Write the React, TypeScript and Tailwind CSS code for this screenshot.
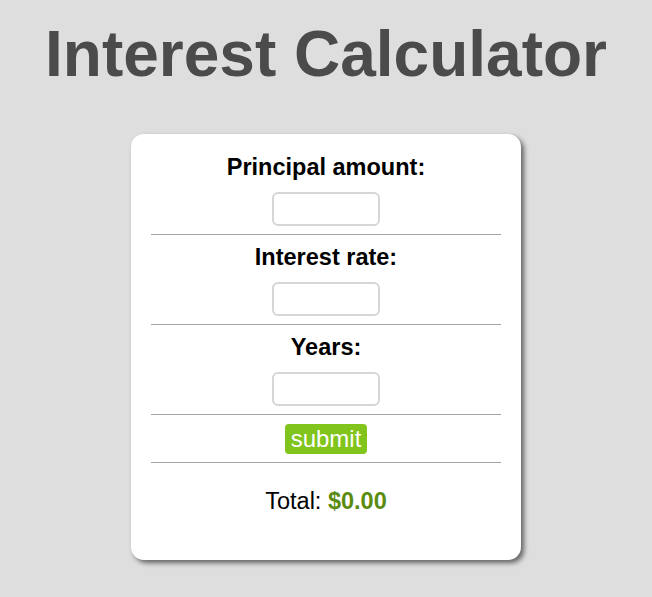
import React from "react";

function Field({ label }: { label: string }) {
  return (
    <>
      <div className="text-[23.5px] leading-[26px] font-bold text-black">{label}</div>
      <input
        type="text"
        className="mt-[12px] w-[108px] h-[34px] border-2 border-[#d6d6d6] rounded-[6px] bg-white outline-none"
      />
      <div className="mt-[8px] mb-[9px] w-full h-px bg-[#a3a3a3]" />
    </>
  );
}

export default function App() {
  return (
    <div
      className="min-h-[597px] w-full bg-[#dedede] flex flex-col items-center"
      style={{ fontFamily: '"Liberation Sans", Arial, sans-serif' }}
    >
      <h1 className="mt-[22px] text-[64px] leading-[64px] font-bold text-[#4b4b4b]">
        Interest Calculator
      </h1>
      <div className="mt-[48px] w-[390px] bg-white rounded-[13px] shadow-[3px_3px_5px_rgba(0,0,0,0.55)] px-[20px] pt-[20px] pb-[46px] flex flex-col items-center">
        <Field label="Principal amount:" />
        <Field label="Interest rate:" />
        <Field label="Years:" />
        <button className="h-[30px] px-[6px] rounded-[4px] bg-[#80c41c] text-white text-[24px] leading-[30px]">
          submit
        </button>
        <div className="mt-[8px] w-full h-px bg-[#a3a3a3]" />
        <div className="mt-[25px] text-[23.5px] leading-[26px] text-black">
          Total: <span className="font-bold text-[#5b8c10]">$0.00</span>
        </div>
      </div>
    </div>
  );
}
